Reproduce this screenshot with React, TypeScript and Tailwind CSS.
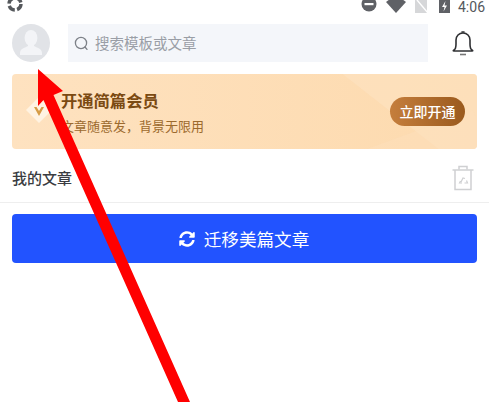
import { FaSyncAlt } from "react-icons/fa"

const cjk = { fontFamily: '"Noto Sans CJK SC", "Noto Sans", sans-serif' }

function StatusBar() {
  return (
    <div className="flex h-[14px] items-start justify-between pl-[7px] pr-[4px]">
      <svg width="18" height="14" viewBox="0 0 18 14" className="-mt-[1px]">
        <circle cx="8" cy="5" r="6" fill="none" stroke="#55585c" strokeWidth="3.4" strokeDasharray="7 2.4" />
      </svg>
      <div className="flex h-[14px] items-start">
        <svg width="16" height="14" viewBox="0 0 16 14" className="mr-[9px] -mt-[1px]">
          <circle cx="8" cy="5" r="7.5" fill="#5f6166" />
          <rect x="3.5" y="4" width="9" height="2.2" fill="#fff" />
        </svg>
        <svg width="20" height="14" viewBox="0 0 20 14" className="mr-[8px]">
          <path d="M0 2 L4 -1 H16 L20 2 L10 13 Z" fill="#5f6166" />
        </svg>
        <svg width="14" height="14" viewBox="0 0 14 14" className="mr-[11px]">
          <path d="M1 0 H13 V13 H1 Z" fill="#d6d7d9" />
          <path d="M3 0 L14 13" stroke="#fff" strokeWidth="1.4" />
        </svg>
        <svg width="11" height="14" viewBox="0 0 11 14" className="mr-[8px]">
          <rect x="0" y="0" width="11" height="13" fill="#5f6166" />
          <path d="M6.5 1 L3 7 H5.5 L4.5 11.5 L8 5.5 H5.5 Z" fill="#fff" />
        </svg>
        <span className="text-[14px] leading-[15px] text-[#55585c]" style={{ fontFamily: "Roboto, sans-serif" }}>
          4:06
        </span>
      </div>
    </div>
  )
}

function Header() {
  return (
    <div className="mt-[10px] flex h-[38px] items-center pl-[12px] pr-[14px]">
      <div className="flex h-[38px] w-[38px] items-center justify-center overflow-hidden rounded-full bg-[#e1e3e7]">
        <svg width="26" height="28" viewBox="0 0 26 28">
          <ellipse cx="13" cy="9" rx="6.4" ry="8" fill="#f3f4f7" />
          <path d="M10 15 L10 17 C6 19 2 20 2 24 V26 H24 V24 C24 20 20 19 16 17 V15 Z" fill="#f3f4f7" />
        </svg>
      </div>
      <div className="ml-[18px] flex h-[38px] w-[360px] items-center bg-[#f4f6fa] pl-[6px]">
        <svg width="15" height="15" viewBox="0 0 15 15" fill="none" stroke="#7d8188" strokeWidth="1.3" strokeLinecap="round">
          <circle cx="7" cy="7" r="5.6" />
          <path d="M11 11 L13 13.4" />
        </svg>
        <span className="ml-[6px] text-[14.5px] leading-none text-[#9a9ea6]">搜索模板或文章</span>
      </div>
      <svg width="24" height="28" viewBox="0 0 24 28" fill="none" stroke="#2f3033" strokeWidth="1.6" className="ml-auto">
        <path d="M3 21 C5 20 5 18 5 15 V11 C5 7 8 4 12 4 C16 4 19 7 19 11 V15 C19 18 19 20 21 21 C22 21.5 22 22 21 22 H3 C2 22 2 21.5 3 21 Z" strokeLinejoin="round" />
        <path d="M11 3 H13" strokeLinecap="round" />
        <path d="M9 25.5 H15" stroke="#777" strokeWidth="1.6" />
      </svg>
    </div>
  )
}

function VipBanner() {
  return (
    <div className="relative mx-[12px] mt-[12px] flex h-[75px] items-center overflow-hidden rounded-[4px] bg-gradient-to-r from-[#fee2c0] to-[#fddaae]">
      <div className="absolute -right-[30px] -top-[40px] h-[90px] w-[170px] rotate-[38deg] bg-[#fee3c2]/60" />
      <div className="absolute -bottom-[40px] -right-[10px] h-[60px] w-[120px] -rotate-[20deg] bg-[#fde0bb]/50" />
      <svg width="30" height="30" viewBox="0 0 30 30" className="relative ml-[12px] -mt-[3px] shrink-0">
        <path d="M15 2 L28 15 L15 28 L2 15 Z" fill="#fff3e2" />
        <path d="M10 12 L15 21 L20 12 L17.5 12 L15 16 L12.5 12 Z" fill="#d69c45" />
      </svg>
      <div className="relative ml-[7px] flex flex-col">
        <span className="text-[16.3px] font-bold leading-[22px] text-[#7b4a12]">开通简篇会员</span>
        <span className="mt-[6px] text-[13px] leading-[18px] text-[#9c6a2e]">文章随意发，背景无限用</span>
      </div>
      <div className="relative ml-auto mr-[12px] flex h-[29px] w-[75px] items-center justify-center rounded-full bg-gradient-to-r from-[#c57e3c] to-[#9a5a1d] text-[14px] font-medium text-white">
        立即开通
      </div>
    </div>
  )
}

function ArticlesRow() {
  return (
    <div className="flex h-[54px] items-center justify-between border-b border-[#eeeeee] pt-[5px] pl-[12px] pr-[15px]">
      <span className="text-[15px] font-medium text-[#3a3c41]">我的文章</span>
      <svg width="22" height="26" viewBox="0 0 22 26" fill="none" stroke="#cfd0d2" strokeWidth="1.5">
        <path d="M0.5 5 H21.5" />
        <path d="M7 4.5 V1.5 H15 V4.5" />
        <path d="M3 5 V24.5 H19 V5" />
        <path d="M9 17 L11 13 L13 13.5 M14.5 15.5 L15.5 18 H12.5 M10 18 H7.5 L8.5 16" strokeWidth="1.2" />
      </svg>
    </div>
  )
}

function MigrateButton() {
  return (
    <div className="mx-[12px] mt-[11px] flex h-[49px] items-center justify-center rounded-[4px] bg-[#2253ff] pr-[1px] text-white">
      <FaSyncAlt size={16} />
      <span className="ml-[9px] text-[17.6px] leading-none">迁移美篇文章</span>
    </div>
  )
}

export default function App() {
  return (
    <div className="relative h-[402px] w-[489px] overflow-hidden bg-white" style={cjk}>
      <StatusBar />
      <Header />
      <VipBanner />
      <ArticlesRow />
      <MigrateButton />
      {/* annotation arrow drawn over the screenshot */}
      <svg width="489" height="402" viewBox="0 0 489 402" className="pointer-events-none absolute left-0 top-0">
        <path d="M38 69 L63 91 L53.5 95 L190 402 L178 402 L43.5 100 L38 106 Z" fill="#ff0000" />
      </svg>
    </div>
  )
}
